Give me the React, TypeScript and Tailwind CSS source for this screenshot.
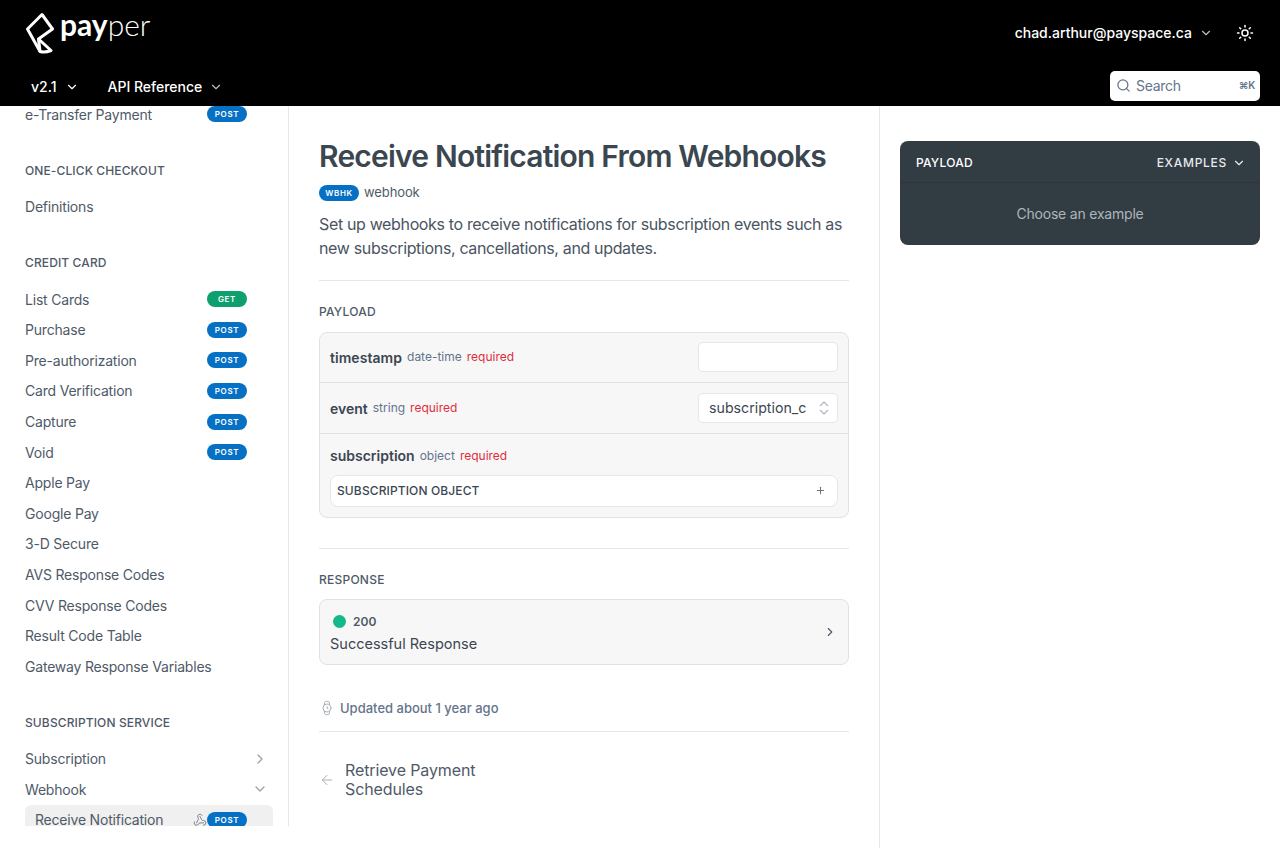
import { ArrowLeft, ChevronDown, ChevronRight, ChevronsUpDown, Plus, Search, Sun, Watch, Webhook } from "lucide-react";

type NavItem = { label: string; method?: "GET" | "POST"; chevron?: "right" | "down" };

const CARD_ITEMS: NavItem[] = [
  { label: "List Cards", method: "GET" },
  { label: "Purchase", method: "POST" },
  { label: "Pre-authorization", method: "POST" },
  { label: "Card Verification", method: "POST" },
  { label: "Capture", method: "POST" },
  { label: "Void", method: "POST" },
  { label: "Apple Pay" },
  { label: "Google Pay" },
  { label: "3-D Secure" },
  { label: "AVS Response Codes" },
  { label: "CVV Response Codes" },
  { label: "Result Code Table" },
  { label: "Gateway Response Variables" },
];

function Badge({ method }: { method: "GET" | "POST" }) {
  return (
    <span
      className={`flex h-4 w-10 items-center justify-center rounded-full text-[8px] font-semibold tracking-[0.08em] text-white ${
        method === "GET" ? "bg-[#0e9f6e]" : "bg-[#0670c4]"
      }`}
    >
      {method}
    </span>
  );
}

function NavRow({ item }: { item: NavItem }) {
  return (
    <div className="flex h-[30.6px] items-center justify-between pr-[41px] text-[14px] tracking-[-0.2px] text-[#4f5a68]">
      <span>{item.label}</span>
      {item.method && <Badge method={item.method} />}
      {item.chevron === "right" && <ChevronRight className="-mr-[21px] h-4 w-4 text-[#9aa3af]" />}
      {item.chevron === "down" && <ChevronDown className="-mr-[21px] h-4 w-4 text-[#9aa3af]" />}
    </div>
  );
}

function SectionTitle({ children }: { children: string }) {
  return <div className="text-[12px] font-medium leading-4 tracking-[0.01em] text-[#4f5a68]">{children}</div>;
}

function Logo() {
  return (
    <svg width="30" height="42" viewBox="0 0 30 42" fill="none" stroke="white" strokeWidth="3" strokeLinejoin="round">
      <path d="M2.5 17 L17 2.5 L27.5 17 L13.5 27 L26 38.5 Q20 41 15 39.5 Z" />
      <path d="M13.5 27 L15 39.5" />
    </svg>
  );
}

export default function App() {
  return (
    <div className="flex h-[848px] flex-col overflow-hidden bg-white font-['Inter',sans-serif] text-[#3c4652]">
      <header className="h-[106px] shrink-0 bg-black text-white">
        <div className="flex h-[65px] items-center justify-between pl-[25px] pr-[26px]">
          <div className="flex items-center gap-[5px]">
            <Logo />
            <span className="-mt-[17px] font-['Lato',sans-serif] text-[30px] leading-none">
              <span className="font-bold">pay</span>
              <span className="font-light">per</span>
            </span>
          </div>
          <div className="flex items-center">
            <span className="text-[14px] font-medium">chad.arthur@payspace.ca</span>
            <ChevronDown className="ml-[7px] h-[14px] w-[14px] text-[#b6bcc4]" />
            <Sun className="ml-[23px] h-[18px] w-[18px]" />
          </div>
        </div>
        <div className="flex h-[41px] items-center justify-between pl-[31px] pr-5">
          <div className="flex items-center pt-[2px] text-[14px] font-medium">
            <span>v2.1</span>
            <ChevronDown className="ml-[8px] h-[14px] w-[14px]" />
            <span className="ml-[29px]">API Reference</span>
            <ChevronDown className="ml-[7px] h-[14px] w-[14px] text-[#b6bcc4]" />
          </div>
          <div className="flex h-[30px] w-[150px] items-center rounded-[5px] bg-white pl-[6px] pr-[5px] text-[14px] tracking-[-0.3px] text-[#64748b]">
            <Search className="h-[15px] w-[15px]" />
            <span className="ml-[5px] flex-1">Search</span>
            <span className="text-[10px] font-semibold">⌘K</span>
          </div>
        </div>
      </header>

      <div className="flex min-h-0 flex-1">
        <aside className="h-[720px] w-[289px] shrink-0 overflow-hidden border-r border-[#e5e7eb] pl-[25px]">
          <div className="-mt-[7px]">
            <NavRow item={{ label: "e-Transfer Payment", method: "POST" }} />
            <div className="mt-[33px] mb-[13px]">
              <SectionTitle>ONE-CLICK CHECKOUT</SectionTitle>
            </div>
            <NavRow item={{ label: "Definitions" }} />
            <div className="mt-[33px] mb-[12.7px]">
              <SectionTitle>CREDIT CARD</SectionTitle>
            </div>
            {CARD_ITEMS.map((item) => (
              <NavRow key={item.label} item={item} />
            ))}
            <div className="mt-[33.3px] mb-[12.6px]">
              <SectionTitle>SUBSCRIPTION SERVICE</SectionTitle>
            </div>
            <NavRow item={{ label: "Subscription", chevron: "right" }} />
            <NavRow item={{ label: "Webhook", chevron: "down" }} />
            <div className="mr-[15px] flex h-[30.6px] items-center rounded-md bg-[#f0f0f0] pl-[10px] pr-[26px] text-[14px] tracking-[-0.2px] text-[#4f5a68]">
              <span>Receive Notification</span>
              <Webhook className="ml-auto h-[14px] w-[14px] text-[#6b7280]" strokeWidth={1.5} />
              <Badge method="POST" />
            </div>
          </div>
        </aside>

        <main className="w-[591px] shrink-0 border-r border-[#e5e7eb] px-[30px]">
          <h1 className="mt-[29px] text-[30px] font-semibold leading-[42px] tracking-[-0.8px] text-[#3a4650]">
            Receive Notification From Webhooks
          </h1>
          <div className="mt-[6px] flex items-center gap-[5px]">
            <span className="flex h-4 w-10 items-center justify-center rounded-full bg-[#0670c4] text-[8px] font-semibold tracking-[0.08em] text-white">
              WBHK
            </span>
            <span className="text-[13px] tracking-[-0.1px] text-[#4f5a68]">webhook</span>
          </div>
          <p className="mt-[9px] text-[16px] leading-6 tracking-[-0.35px] text-[#4a5562]">
            Set up webhooks to receive notifications for subscription events such as new subscriptions, cancellations,
            and updates.
          </p>
          <div className="mt-5 border-t border-[#e5e7eb]" />

          <div className="mt-[23px] text-[12px] font-medium leading-4 tracking-[0.02em] text-[#4f5a68]">PAYLOAD</div>
          <div className="mt-3 rounded-lg border border-[#e0e2e5] bg-[#f7f7f7] text-[12px]">
            <div className="flex h-[50px] items-center justify-between border-b border-[#e0e2e5] px-[10px]">
              <div className="flex items-center">
                <span className="text-[14px] font-semibold tracking-[0.05px] text-[#3c4652]">timestamp</span>
                <span className="ml-[5px] text-[#64748b]">date-time</span>
                <span className="ml-[5px] text-[#e02d3c]">required</span>
              </div>
              <div className="h-[30px] w-[140px] rounded-[5px] border border-[#e5e7eb] bg-white" />
            </div>
            <div className="flex h-[51px] items-center justify-between border-b border-[#e0e2e5] px-[10px]">
              <div className="flex items-center pt-[1px]">
                <span className="text-[14px] font-semibold text-[#3c4652]">event</span>
                <span className="ml-[5px] text-[#64748b]">string</span>
                <span className="ml-[5px] text-[#e02d3c]">required</span>
              </div>
              <div className="flex h-[30px] w-[140px] items-center rounded-[5px] border border-[#e5e7eb] bg-white pl-[10px] pr-[4px] text-[14.2px] text-[#3c4652]">
                <span className="pt-[1px]">subscription_c</span>
                <ChevronsUpDown className="ml-auto h-[18px] w-[18px] text-[#b0b6be]" strokeWidth={1.5} />
              </div>
            </div>
            <div className="px-[10px] pb-[10px] pt-[12px]">
              <div className="flex items-center leading-[20px]">
                <span className="text-[14px] font-semibold text-[#3c4652]">subscription</span>
                <span className="ml-[5px] text-[#64748b]">object</span>
                <span className="ml-[5px] text-[#e02d3c]">required</span>
              </div>
              <div className="mt-[9px] flex h-[32px] items-center justify-between rounded-lg border border-[#e5e7eb] bg-white pl-[6px] pr-[11px]">
                <span className="pt-[1px] text-[12px] font-medium tracking-[0.01em] text-[#3c4652]">SUBSCRIPTION OBJECT</span>
                <Plus className="h-[11px] w-[11px] text-[#6b7280]" strokeWidth={2.2} />
              </div>
            </div>
          </div>
          <div className="mt-[30px] border-t border-[#e5e7eb]" />

          <div className="mt-[23px] text-[12px] font-medium leading-4 tracking-[0.02em] text-[#4f5a68]">RESPONSE</div>
          <div className="mt-[11px] flex h-[66px] items-center justify-between rounded-lg border border-[#e0e2e5] bg-[#f7f7f7] pl-[10px] pr-[11px]">
            <div className="pt-[2px]">
              <div className="flex items-center pl-[3px] text-[12px] font-semibold leading-5 text-[#4f5a68]">
                <span className="h-[13px] w-[13px] rounded-full bg-[#14b88a]" />
                <span className="ml-[7px]">200</span>
              </div>
              <div className="mt-[2px] text-[14.5px] leading-5 text-[#3c4652]">Successful Response</div>
            </div>
            <ChevronRight className="h-[14px] w-[14px] text-[#4f5a68]" />
          </div>

          <div className="mt-[34px] flex items-center text-[13px] text-[#64748b]">
            <Watch className="h-4 w-4 text-[#aab1ba]" strokeWidth={1.5} />
            <span className="ml-[5px] font-medium">Updated about 1 year ago</span>
          </div>
          <div className="mt-[13px] border-t border-[#e5e7eb]" />

          <div className="mt-[29px] flex items-center">
            <ArrowLeft className="h-4 w-4 text-[#aab1ba]" strokeWidth={1.5} />
            <span className="ml-[10px] w-[160px] text-[16px] leading-[19px] tracking-[-0.12px] text-[#4f5a68]">
              Retrieve Payment Schedules
            </span>
          </div>
        </main>

        <section className="flex-1 px-5 pt-[35px]">
          <div className="h-[104px] overflow-hidden rounded-lg bg-[#323c43] text-white">
            <div className="flex h-[42px] items-center justify-between border-b border-[#2c363c] pl-4 pr-[14px] pt-[2px] text-[12px] font-medium">
              <span className="tracking-[0.02em]">PAYLOAD</span>
              <span className="flex items-center tracking-[0.06em] text-[#e7e9eb]">
                EXAMPLES
                <ChevronDown className="ml-[5px] h-[14px] w-[14px]" />
              </span>
            </div>
            <div className="pt-[21px] text-center text-[14px] leading-5 tracking-[-0.2px] text-[#aeb5ba]">
              Choose an example
            </div>
          </div>
        </section>
      </div>
    </div>
  );
}
